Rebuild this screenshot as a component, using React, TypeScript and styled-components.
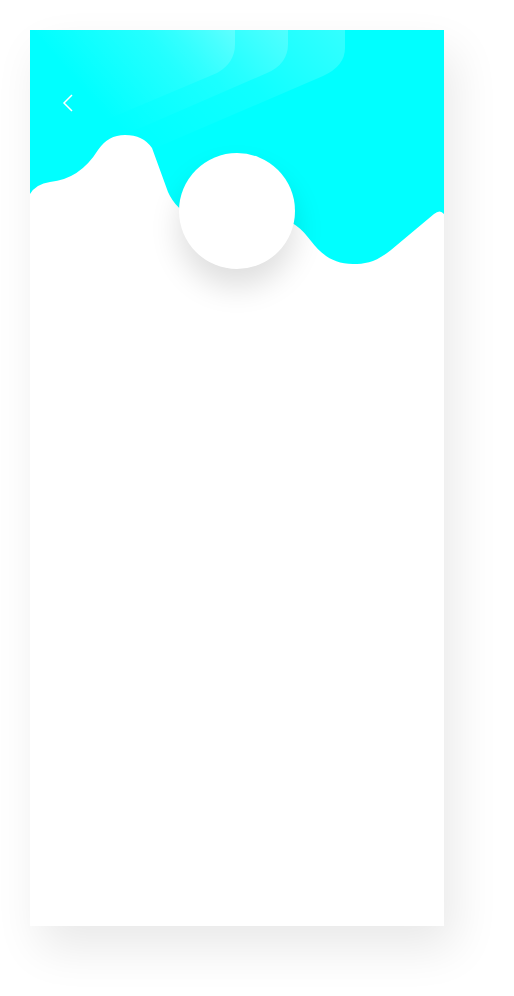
import styled, { createGlobalStyle } from "styled-components";

const GlobalStyle = createGlobalStyle`
  html, body {
    margin: 0;
    padding: 0;
    background: #ffffff;
    font-family: "Open Sans", "Liberation Sans", sans-serif;
  }
`

const Page = styled.div`
  width: 514px;
  min-height: 996px;
  padding: 30px 0 0 30px;
  box-sizing: border-box;
`

const Card = styled.div`
  width: 414px;
  height: 896px;
  background: #ffffff;
  box-shadow: 10px 22px 44px rgba(0, 0, 0, 0.09);
  overflow: hidden;
  display: flex;
  flex-direction: column;
`

const Header = styled.header`
  position: relative;
  display: flex;
  flex-direction: column;
  padding: 64px 32px 0;
  height: 260px;
  box-sizing: border-box;
`

const Waves = styled.svg`
  position: absolute;
  inset: 0;
  width: 414px;
  height: 260px;
  z-index: 0;
`

const BackButton = styled.button`
  position: relative;
  z-index: 1;
  width: 12px;
  height: 18px;
  padding: 0;
  border: 0;
  background: none;
  cursor: pointer;
  display: flex;
`

const Avatar = styled.div`
  position: relative;
  z-index: 1;
  align-self: center;
  width: 116px;
  height: 116px;
  margin-top: 41px;
  border-radius: 50%;
  background: #ffffff;
  box-shadow: 0 18px 30px rgba(0, 0, 0, 0.13);
`

const Body = styled.main`
  flex: 1;
`

export default function App() {
  return (
    <>
      <GlobalStyle/>
      <Page>
        <Card>
          <Header>
            <Waves viewBox="0 0 414 260">
              <defs>
                <linearGradient id="fade" x1="1" y1="0" x2="0.2" y2="0.4">
                  <stop offset="0" stopColor="#ffffff" stopOpacity="0.2"/>
                  <stop offset="0.45" stopColor="#ffffff" stopOpacity="0.06"/>
                  <stop offset="1" stopColor="#ffffff" stopOpacity="0"/>
                </linearGradient>
              </defs>
              <path
                d="M0 0 H414 V184 Q410 179 404 184 L361 220 C346 232 336 234 323 234 C303 234 291 224 281 211 C272 199 262 190 245 186 L165 188 Q146 180 138 162 L122 118 Q113 105 95 105 Q78 105 68 120 Q50 149 20 152 Q6 154 0 164 Z"
                fill="#00ffff"
              />
              <path d="M0 0 H315 V18 Q315 36 293 46 L0 172 Z" fill="url(#fade)"/>
              <path d="M0 0 H258 V14 Q258 34 237 43 L0 146 Z" fill="url(#fade)"/>
              <path d="M0 0 H205 V14 Q205 33 187 43 L0 122 Z" fill="url(#fade)"/>
            </Waves>
            <BackButton aria-label="Back">
              <svg width="12" height="18" viewBox="0 0 12 18">
                <path d="M10 1 L2 9 L10 17" fill="none" stroke="#ffffff" strokeWidth="1.5"/>
              </svg>
            </BackButton>
            <Avatar/>
          </Header>
          <Body/>
        </Card>
      </Page>
    </>
  )
}
